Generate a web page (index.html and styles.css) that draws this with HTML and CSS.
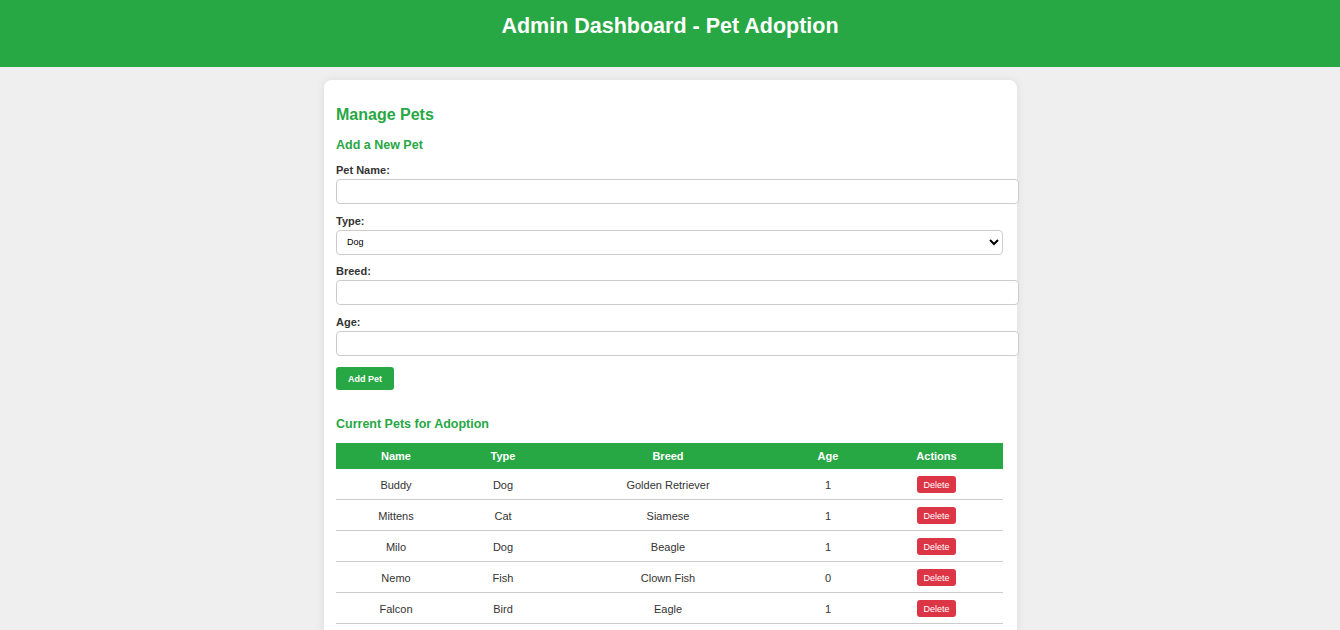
FILE: index.html
```html
<!DOCTYPE html>
<html lang="en">
<head>
<meta charset="UTF-8">
<title>Admin Dashboard - Pet Adoption</title>
<link rel="stylesheet" href="styles.css">
</head>
<body>
<header class="site-header">
  <h1 class="site-title">Admin Dashboard - Pet Adoption</h1>
</header>
<main class="card">
  <h2 class="section-title">Manage Pets</h2>
  <h3 class="sub-title">Add a New Pet</h3>
  <form class="pet-form">
    <label class="field-label" for="name">Pet Name:</label>
    <input class="field-input" id="name" type="text">
    <label class="field-label" for="type">Type:</label>
    <select class="field-select" id="type">
      <option>Dog</option>
      <option>Cat</option>
      <option>Fish</option>
      <option>Bird</option>
    </select>
    <label class="field-label" for="breed">Breed:</label>
    <input class="field-input" id="breed" type="text">
    <label class="field-label" for="age">Age:</label>
    <input class="field-input" id="age" type="text">
    <button class="btn-add" type="button">Add Pet</button>
  </form>
  <h3 class="sub-title list-title">Current Pets for Adoption</h3>
  <table class="pet-table">
    <thead>
      <tr>
        <th class="col-name">Name</th>
        <th class="col-type">Type</th>
        <th class="col-breed">Breed</th>
        <th class="col-age">Age</th>
        <th class="col-actions">Actions</th>
      </tr>
    </thead>
    <tbody>
      <tr><td>Buddy</td><td>Dog</td><td>Golden Retriever</td><td>1</td><td><button class="btn-delete" type="button">Delete</button></td></tr>
      <tr><td>Mittens</td><td>Cat</td><td>Siamese</td><td>1</td><td><button class="btn-delete" type="button">Delete</button></td></tr>
      <tr><td>Milo</td><td>Dog</td><td>Beagle</td><td>1</td><td><button class="btn-delete" type="button">Delete</button></td></tr>
      <tr><td>Nemo</td><td>Fish</td><td>Clown Fish</td><td>0</td><td><button class="btn-delete" type="button">Delete</button></td></tr>
      <tr><td>Falcon</td><td>Bird</td><td>Eagle</td><td>1</td><td><button class="btn-delete" type="button">Delete</button></td></tr>
    </tbody>
  </table>
</main>
</body>
</html>
```
FILE: styles.css
```css
* {
  margin: 0;
}

body {
  margin: 0;
  background: #efefef;
  font-family: "Liberation Sans", Arial, sans-serif;
  color: #333;
}

.site-header {
  background: #28a745;
  height: 67px;
  box-sizing: border-box;
  padding-top: 14px;
  text-align: center;
}

.site-title {
  color: #fff;
  font-size: 21.5px;
  line-height: 25px;
  font-weight: bold;
}

.card {
  width: 667px;
  margin: 13px auto 0;
  padding: 13px 13.5px 40px 12.5px;
  background: #fff;
  border-radius: 8px;
  box-shadow: 0 0 10px rgba(0, 0, 0, 0.08);
}

.section-title {
  color: #28a745;
  font-size: 16px;
  line-height: 18px;
  margin-top: 13px;
}

.sub-title {
  color: #28a745;
  font-size: 12.5px;
  line-height: 15px;
  margin-top: 14px;
}

.pet-form {
  display: flex;
  flex-direction: column;
  align-items: flex-start;
  margin-top: 11px;
}

.field-label {
  display: block;
  font-size: 11px;
  line-height: 13px;
  font-weight: bold;
  color: #333;
  margin-bottom: 2px;
}

.field-input {
  box-sizing: content-box;
  width: 100%;
  height: 23px;
  padding: 0 7px;
  border: 1px solid #ccc;
  border-radius: 4px;
  margin-bottom: 10.5px;
  font-family: inherit;
  font-size: 9px;
}

.field-select {
  box-sizing: border-box;
  width: 100%;
  height: 25px;
  padding: 0 6px;
  border: 1px solid #ccc;
  border-radius: 4px;
  margin-bottom: 10.5px;
  font-family: inherit;
  font-size: 9px;
  color: #000;
  background: #fff;
}

.btn-add {
  background: #28a745;
  color: #fff;
  border: none;
  border-radius: 3px;
  height: 23px;
  margin-top: 1px;
  padding: 0 12px;
  font-family: inherit;
  font-size: 9px;
  font-weight: bold;
  cursor: pointer;
}

.list-title {
  margin-top: 27px;
}

.pet-table {
  width: 100%;
  border-collapse: collapse;
  margin-top: 11px;
  font-size: 11px;
  text-align: center;
}

.pet-table th {
  background: #28a745;
  color: #fff;
  font-weight: bold;
  height: 26px;
  padding: 0;
}

.pet-table td {
  height: 29px;
  padding: 1px 0 0;
  border-bottom: 1px solid #ccc;
  color: #333;
}

.col-name { width: 120px; }
.col-type { width: 94px; }
.col-breed { width: 236px; }
.col-age { width: 84px; }
.col-actions { width: 133px; }

.btn-delete {
  background: #dc3545;
  color: #fff;
  border: none;
  border-radius: 3px;
  height: 17px;
  padding: 0 6px;
  font-family: inherit;
  font-size: 9px;
  cursor: pointer;
}
```
